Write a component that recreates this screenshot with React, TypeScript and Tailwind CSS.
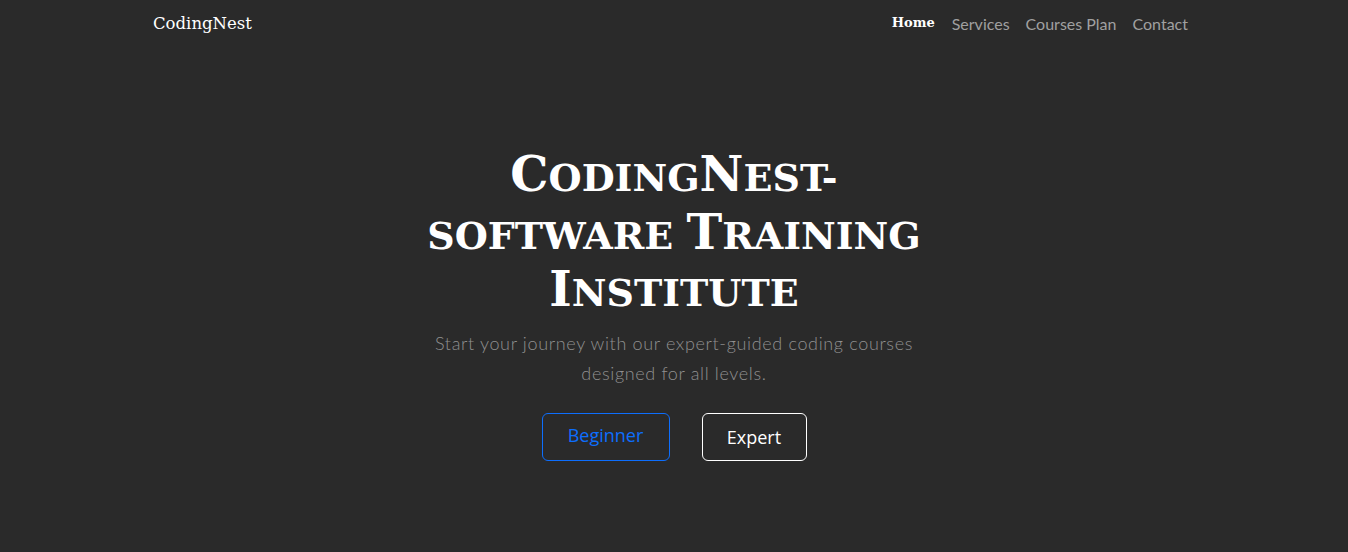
const links = ["Services", "Courses Plan", "Contact"];

const App = () => {
  return (
    <div className="min-h-screen h-[552px] bg-[#2a2a2a] text-white">
      {/* Navbar */}
      <nav className="flex items-center justify-between pl-[153px] pr-[152px] h-[48px]">
        <a className="text-[16.5px] text-white font-['DejaVu_Serif','Liberation_Serif',serif] mt-[1px]">
          CodingNest
        </a>
        <ul className="flex items-center">
          <li className="pl-2 pr-[9px] text-[13px] font-bold text-white font-['DejaVu_Serif','Liberation_Serif',serif] -mt-[2px]">
            Home
          </li>
          {links.map((l) => (
            <li key={l} className="px-2 text-[16px] text-[#a0a0a0] font-['Lato','Open_Sans',sans-serif]">
              {l}
            </li>
          ))}
        </ul>
      </nav>

      {/* Hero */}
      <main className="flex flex-col items-center pt-[101px]">
        <h1 className="w-[560px] text-center text-[38px] leading-[57.6px] font-bold uppercase font-['DejaVu_Serif','Liberation_Serif',serif]">
          <span className="text-[48px] leading-none">C</span>oding<span className="text-[48px] leading-none">N</span>est-
          <br />
          software <span className="text-[48px] leading-none">T</span>raining
          <br />
          <span className="text-[48px] leading-none">I</span>nstitute
        </h1>
        <p className="mt-[6px] w-[500px] text-center text-[18px] leading-[30px] font-light text-[#909090] font-['Lato','Open_Sans',sans-serif] tracking-[0.65px]">
          Start your journey with our expert-guided coding courses designed for all levels.
        </p>
        <div className="mt-[25px] flex gap-8">
          <button className="w-[128px] h-[48px] rounded-[6px] border border-[#0d6efd] text-[#0d6efd] text-[18px] font-['Open_Sans',sans-serif] pb-[3px]">
            Beginner
          </button>
          <button className="w-[105px] h-[48px] rounded-[6px] border border-white text-white text-[18px] font-['Open_Sans',sans-serif] pt-[2px]">
            Expert
          </button>
        </div>
      </main>
    </div>
  );
};

export default App;
